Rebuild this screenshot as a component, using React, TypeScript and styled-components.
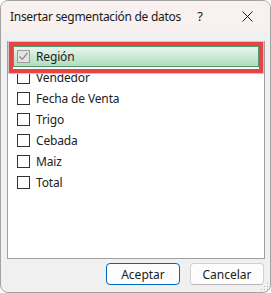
import React from "react";
import styled, { createGlobalStyle } from "styled-components";

const GlobalStyle = createGlobalStyle`
  html, body {
    margin: 0;
    padding: 0;
    background: #ffffff;
  }
  * {
    box-sizing: border-box;
  }
`;

const FONT = `"Segoe UI", "Noto Sans", "Liberation Sans", sans-serif`;

const Window = styled.div`
  position: relative;
  width: 271px;
  height: 293px;
  border: 1px solid #a3a3a3;
  border-radius: 8px;
  overflow: hidden;
  background: #f0f0f0;
  display: flex;
  flex-direction: column;
  font-family: ${FONT};
  color: #1b1b1b;
`;

const TitleBar = styled.div`
  height: 30px;
  flex: none;
  display: flex;
  align-items: center;
  background: #f8f1ef;
  padding-left: 9px;
`;

const Title = styled.div`
  flex: 1;
  min-width: 0;
  white-space: nowrap;
  font-size: 12px;
  letter-spacing: -0.3px;
  color: #1a1a1a;
`;

const TitleButton = styled.div<{ $w: number }>`
  width: ${(p) => p.$w}px;
  flex: none;
  height: 30px;
  display: flex;
  align-items: center;
  justify-content: center;
  font-size: 13px;
  color: #1a1a1a;
`;

const Body = styled.div`
  flex: 1;
  display: flex;
  flex-direction: column;
  padding: 10px 5px 0 6px;
`;

const ListBox = styled.div`
  position: relative;
  height: 218px;
  background: #ffffff;
  border: 1px solid #a0a0a0;
  padding: 4px 5px 0 5px;
  display: flex;
  flex-direction: column;
`;

const Row = styled.div<{ $selected?: boolean }>`
  height: 21px;
  display: flex;
  align-items: center;
  gap: 6px;
  padding-left: 3px;
  font-size: 12px;
  letter-spacing: -0.15px;
  color: #222;
  border: 1px solid ${(p) => (p.$selected ? "#4f9a6a" : "transparent")};
  background: ${(p) =>
    p.$selected
      ? "linear-gradient(to bottom, #e9f6ee 0%, #cdebd8 45%, #b2dcc1 100%)"
      : "transparent"};
`;

const Box = styled.span<{ $disabled?: boolean }>`
  width: 13px;
  height: 13px;
  flex: none;
  display: flex;
  align-items: center;
  justify-content: center;
  border: 1px solid ${(p) => (p.$disabled ? "#9c9c9c" : "#333333")};
  background: ${(p) => (p.$disabled ? "#e4e4e4" : "#ffffff")};
`;

const Highlight = styled.div`
  position: absolute;
  left: 1px;
  right: 1px;
  top: 0px;
  height: 31px;
  border: 4px solid #ea4343;
  box-shadow: 0 0 0 1px #c9c9c9;
  pointer-events: none;
`;

const Footer = styled.div`
  display: flex;
  justify-content: flex-end;
  gap: 10px;
  padding: 4px 1px 0 0;
`;

const Button = styled.button<{ $primary?: boolean }>`
  width: 74px;
  height: 22px;
  font-family: ${FONT};
  font-size: 12px;
  color: #1b1b1b;
  background: #fdfdfd;
  border: 1px solid ${(p) => (p.$primary ? "#0067c0" : "#d0d0d0")};
  border-bottom-color: ${(p) => (p.$primary ? "#0067c0" : "#b8b8b8")};
  border-radius: 4px;
  padding: 0;
`;

const Grip = styled.svg`
  position: absolute;
  right: 1px;
  bottom: 1px;
`;

const items = ["Vendedor", "Fecha de Venta", "Trigo", "Cebada", "Maiz", "Total"];

const App = () => {
  return (
    <>
      <GlobalStyle />
      <Window>
        <TitleBar>
          <Title>Insertar segmentación de datos</Title>
          <TitleButton $w={48}>?</TitleButton>
          <TitleButton $w={46}>
            <svg width="11" height="11" viewBox="0 0 11 11">
              <path d="M0.5 0.5 L10.5 10.5 M10.5 0.5 L0.5 10.5" stroke="#1a1a1a" strokeWidth="1" />
            </svg>
          </TitleButton>
        </TitleBar>
        <Body>
          <ListBox>
            <Row $selected>
              <Box $disabled>
                <svg width="11" height="11" viewBox="0 0 11 11">
                  <path d="M1.5 5.5 L4.2 8.3 L9.5 2" fill="none" stroke="#8c8c8c" strokeWidth="1.3" />
                </svg>
              </Box>
              Región
            </Row>
            {items.map((label) => (
              <Row key={label}>
                <Box />
                {label}
              </Row>
            ))}
            <Highlight />
          </ListBox>
          <Footer>
            <Button $primary>Aceptar</Button>
            <Button>Cancelar</Button>
          </Footer>
        </Body>
        <Grip width="8" height="8" viewBox="0 0 8 8">
          <rect x="6" y="0" width="1" height="1" fill="#b5b5b5" />
          <rect x="3" y="3" width="1" height="1" fill="#b5b5b5" />
          <rect x="6" y="3" width="1" height="1" fill="#b5b5b5" />
          <rect x="0" y="6" width="1" height="1" fill="#b5b5b5" />
          <rect x="3" y="6" width="1" height="1" fill="#b5b5b5" />
          <rect x="6" y="6" width="1" height="1" fill="#b5b5b5" />
        </Grip>
      </Window>
    </>
  );
};

export default App;
